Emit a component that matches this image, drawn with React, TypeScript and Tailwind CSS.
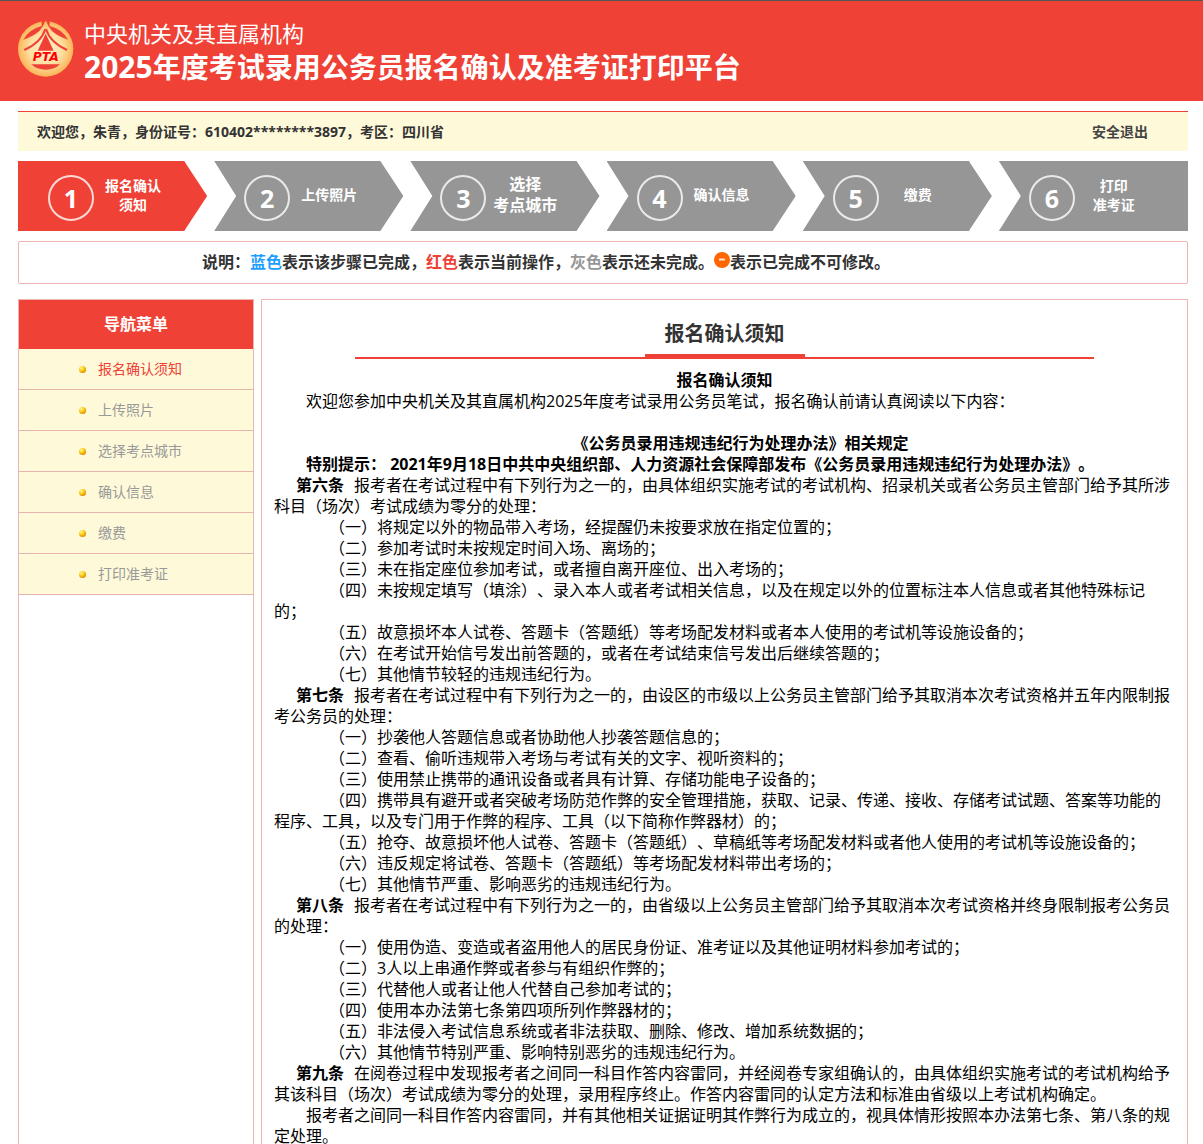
import React from "react";

type Block = {
  kind: "title" | "indent" | "centered" | "notice" | "article" | "item" | "blank";
  head?: string;
  text?: string;
};

const steps: { lines: string[]; large?: boolean }[] = [
  { lines: ["报名确认", "须知"] },
  { lines: ["上传照片"] },
  { lines: ["选择", "考点城市"], large: true },
  { lines: ["确认信息"] },
  { lines: ["缴费"] },
  { lines: ["打印", "准考证"] },
];

const menu = ["报名确认须知", "上传照片", "选择考点城市", "确认信息", "缴费", "打印准考证"];

const blocks: Block[] = [
  { kind: "title", text: "报名确认须知" },
  { kind: "indent", text: "欢迎您参加中央机关及其直属机构2025年度考试录用公务员笔试，报名确认前请认真阅读以下内容：" },
  { kind: "blank" },
  { kind: "centered", text: "《公务员录用违规违纪行为处理办法》相关规定" },
  { kind: "notice", text: "特别提示： 2021年9月18日中共中央组织部、人力资源社会保障部发布《公务员录用违规违纪行为处理办法》。" },
  { kind: "article", head: "第六条", text: "报考者在考试过程中有下列行为之一的，由具体组织实施考试的考试机构、招录机关或者公务员主管部门给予其所涉科目（场次）考试成绩为零分的处理：" },
  { kind: "item", text: "（一）将规定以外的物品带入考场，经提醒仍未按要求放在指定位置的；" },
  { kind: "item", text: "（二）参加考试时未按规定时间入场、离场的；" },
  { kind: "item", text: "（三）未在指定座位参加考试，或者擅自离开座位、出入考场的；" },
  { kind: "item", text: "（四）未按规定填写（填涂）、录入本人或者考试相关信息，以及在规定以外的位置标注本人信息或者其他特殊标记的；" },
  { kind: "item", text: "（五）故意损坏本人试卷、答题卡（答题纸）等考场配发材料或者本人使用的考试机等设施设备的；" },
  { kind: "item", text: "（六）在考试开始信号发出前答题的，或者在考试结束信号发出后继续答题的；" },
  { kind: "item", text: "（七）其他情节较轻的违规违纪行为。" },
  { kind: "article", head: "第七条", text: "报考者在考试过程中有下列行为之一的，由设区的市级以上公务员主管部门给予其取消本次考试资格并五年内限制报考公务员的处理：" },
  { kind: "item", text: "（一）抄袭他人答题信息或者协助他人抄袭答题信息的；" },
  { kind: "item", text: "（二）查看、偷听违规带入考场与考试有关的文字、视听资料的；" },
  { kind: "item", text: "（三）使用禁止携带的通讯设备或者具有计算、存储功能电子设备的；" },
  { kind: "item", text: "（四）携带具有避开或者突破考场防范作弊的安全管理措施，获取、记录、传递、接收、存储考试试题、答案等功能的程序、工具，以及专门用于作弊的程序、工具（以下简称作弊器材）的；" },
  { kind: "item", text: "（五）抢夺、故意损坏他人试卷、答题卡（答题纸）、草稿纸等考场配发材料或者他人使用的考试机等设施设备的；" },
  { kind: "item", text: "（六）违反规定将试卷、答题卡（答题纸）等考场配发材料带出考场的；" },
  { kind: "item", text: "（七）其他情节严重、影响恶劣的违规违纪行为。" },
  { kind: "article", head: "第八条", text: "报考者在考试过程中有下列行为之一的，由省级以上公务员主管部门给予其取消本次考试资格并终身限制报考公务员的处理：" },
  { kind: "item", text: "（一）使用伪造、变造或者盗用他人的居民身份证、准考证以及其他证明材料参加考试的；" },
  { kind: "item", text: "（二）3人以上串通作弊或者参与有组织作弊的；" },
  { kind: "item", text: "（三）代替他人或者让他人代替自己参加考试的；" },
  { kind: "item", text: "（四）使用本办法第七条第四项所列作弊器材的；" },
  { kind: "item", text: "（五）非法侵入考试信息系统或者非法获取、删除、修改、增加系统数据的；" },
  { kind: "item", text: "（六）其他情节特别严重、影响特别恶劣的违规违纪行为。" },
  { kind: "article", head: "第九条", text: "在阅卷过程中发现报考者之间同一科目作答内容雷同，并经阅卷专家组确认的，由具体组织实施考试的考试机构给予其该科目（场次）考试成绩为零分的处理，录用程序终止。作答内容雷同的认定方法和标准由省级以上考试机构确定。" },
  { kind: "indent", text: "报考者之间同一科目作答内容雷同，并有其他相关证据证明其作弊行为成立的，视具体情形按照本办法第七条、第八条的规定处理。" },
];

const blockClass: Record<Block["kind"], string> = {
  title: "text-center font-bold",
  indent: "indent-[32px]",
  centered: "text-center font-bold indent-[32px]",
  notice: "font-bold indent-[32px]",
  article: "indent-[22px]",
  item: "indent-[55px]",
  blank: "h-[21px]",
};

function LogoWing() {
  return (
    <>
      <path d="M83 6L83 27Q46 36 28 68Q58 58 76 42Q90 28 95 6Z" fill="#ef4136" />
      <path d="M94 36Q82 76 31 99" fill="none" stroke="#ef4136" strokeWidth="6" />
    </>
  );
}

function Logo() {
  return (
    <svg width="56" height="56" viewBox="12 12 168 168" className="mb-[4px] shrink-0" role="img" aria-label="PTA">
      <defs>
        <radialGradient id="gold" cx="50%" cy="50%" r="50%">
          <stop offset="0" stopColor="#fff3d8" />
          <stop offset="0.6" stopColor="#fddfa0" />
          <stop offset="1" stopColor="#fbb458" />
        </radialGradient>
      </defs>
      <circle cx="95" cy="96" r="83" fill="url(#gold)" />
      <LogoWing />
      <g transform="translate(190 0) scale(-1 1)">
        <LogoWing />
      </g>
      <path d="M95 50L119 101H71Z" fill="#ef4136" />
      <path d="M52 142H138Q122 158 95 158Q68 158 52 142Z" fill="#ef4136" />
      <text x="95" y="133" textAnchor="middle" fontFamily="DejaVu Sans" fontSize="37" fontWeight="700" fontStyle="italic" fill="#ff0000">
        PTA
      </text>
    </svg>
  );
}

function Bullet() {
  return (
    <svg width="7" height="7" viewBox="0 0 7 7" className="shrink-0" aria-hidden="true">
      <defs>
        <radialGradient id="bead" cx="35%" cy="30%" r="75%">
          <stop offset="0" stopColor="#fff890" />
          <stop offset="0.5" stopColor="#fccc18" />
          <stop offset="1" stopColor="#d88400" />
        </radialGradient>
      </defs>
      <circle cx="3.500" cy="3.500" r="3.500" fill="url(#bead)" />
    </svg>
  );
}

function stepShape(i: number) {
  if (i === 0) return "bg-[#ef4136] [clip-path:polygon(0_0,calc(100%-23px)_0,100%_50%,calc(100%-23px)_100%,0_100%)]";
  if (i === steps.length - 1) return "bg-[#969696] [clip-path:polygon(0_0,100%_0,100%_100%,0_100%,22px_50%)]";
  return "bg-[#969696] [clip-path:polygon(0_0,calc(100%-23px)_0,100%_50%,calc(100%-23px)_100%,0_100%,22px_50%)]";
}

export default function App() {
  return (
    <div className="flex min-h-screen flex-col bg-white font-['Open_Sans','Noto_Sans_CJK_SC',sans-serif] text-[#333] [text-spacing-trim:space-all]" lang="zh-CN">
      <header className="flex items-center gap-[10px] border-t border-[#555] bg-[#ef4136] px-[18px] py-[16px] text-white">
        <Logo />
        <div>
          <div className="text-[22px] leading-[32px]">中央机关及其直属机构</div>
          <h1 className="text-[28px] leading-[36px] font-bold">
            <span className="text-[30px]">2025</span>年度考试录用公务员报名确认及准考证打印平台
          </h1>
        </div>
      </header>

      <div className="flex flex-1 flex-col pt-[10px] pr-[15px] pl-[18px]">
        <div className="flex h-[40px] items-center justify-between border-t border-[#ef4136] bg-[#fef9d9] pr-[40px] pl-[19px] text-[14px] font-bold">
          <span>欢迎您，朱青，身份证号：610402********3897，考区：四川省</span>
          <a href="#logout" className="text-[#444]">安全退出</a>
        </div>

        <ol className="mt-[10px] flex gap-[7px]">
          {steps.map((s, i) => (
            <li key={i} className={`flex h-[70px] flex-1 items-center pl-[30px] font-bold text-white ${stepShape(i)}`}>
              <span className="mt-[4px] flex size-[46px] shrink-0 items-center justify-center rounded-full border-2 border-white/80 text-[25px] leading-[26px]">
                {i + 1}
              </span>
              <span className={`ml-1 w-[70px] pb-[3px] text-center ${s.large ? "text-[16px] leading-[21px]" : "text-[14px] leading-[19px]"}`}>
                {s.lines.map((l) => (
                  <span key={l} className="block">{l}</span>
                ))}
              </span>
            </li>
          ))}
        </ol>

        <p className="mt-[10px] flex h-[43px] items-center rounded-[2px] border border-[#eeb5b0] pb-[2px] pl-[183px] text-[16px] font-bold">
          <span>说明：</span>
          <span className="text-[#1e9fff]">蓝色</span>
          <span>表示该步骤已完成，</span>
          <span className="text-[#ef4136]">红色</span>
          <span>表示当前操作，</span>
          <span className="text-[#969696]">灰色</span>
          <span>表示还未完成。</span>
          <svg width="16" height="16" viewBox="0 0 16 16" className="mb-[3px]" aria-hidden="true">
            <circle cx="8" cy="8" r="8" fill="#ff6600" />
            <rect x="5" y="6.500" width="6" height="2" rx="0.500" fill="#ffe8d8" />
          </svg>
          <span>表示已完成不可修改。</span>
        </p>

        <div className="mt-[15px] flex flex-1 gap-[7px]">
          <nav className="w-[236px] shrink-0 border-x border-t border-[#eeb5b0]">
            <h2 className="flex h-[49px] items-center justify-center bg-[#ef4136] pb-[2px] text-[16px] font-bold text-white">导航菜单</h2>
            <ul>
              {menu.map((m, i) => (
                <li key={m} className="border-b border-[#e6b5ae] bg-[#fef9d9]">
                  <a href={`#step-${i + 1}`} className={`flex h-[40px] items-center gap-[12px] pl-[60px] text-[14px] ${i === 0 ? "text-[#ef4136]" : "text-[#999]"}`}>
                    <Bullet />
                    <span className="pb-[2px]">{m}</span>
                  </a>
                </li>
              ))}
            </ul>
          </nav>

          <main className="min-w-0 flex-1 border-x border-t border-[#eeb5b0] px-[12px] pt-[12px]">
            <h2 className="mx-auto flex w-[82%] justify-center border-b-2 border-[#ef4136] text-[20px] font-bold">
              <span className="flex h-[45px] w-[160px] items-center justify-center border-b-[3px] border-[#ef4136] pt-[2px]">报名确认须知</span>
            </h2>
            <div className="mt-[11px] text-[16px] leading-[21px] text-black">
              {blocks.map((b, i) => (
                <p key={i} className={blockClass[b.kind]}>
                  {b.head && <strong className="mr-[10px] font-bold">{b.head}</strong>}
                  {b.text}
                </p>
              ))}
            </div>
          </main>
        </div>
      </div>
    </div>
  );
}
